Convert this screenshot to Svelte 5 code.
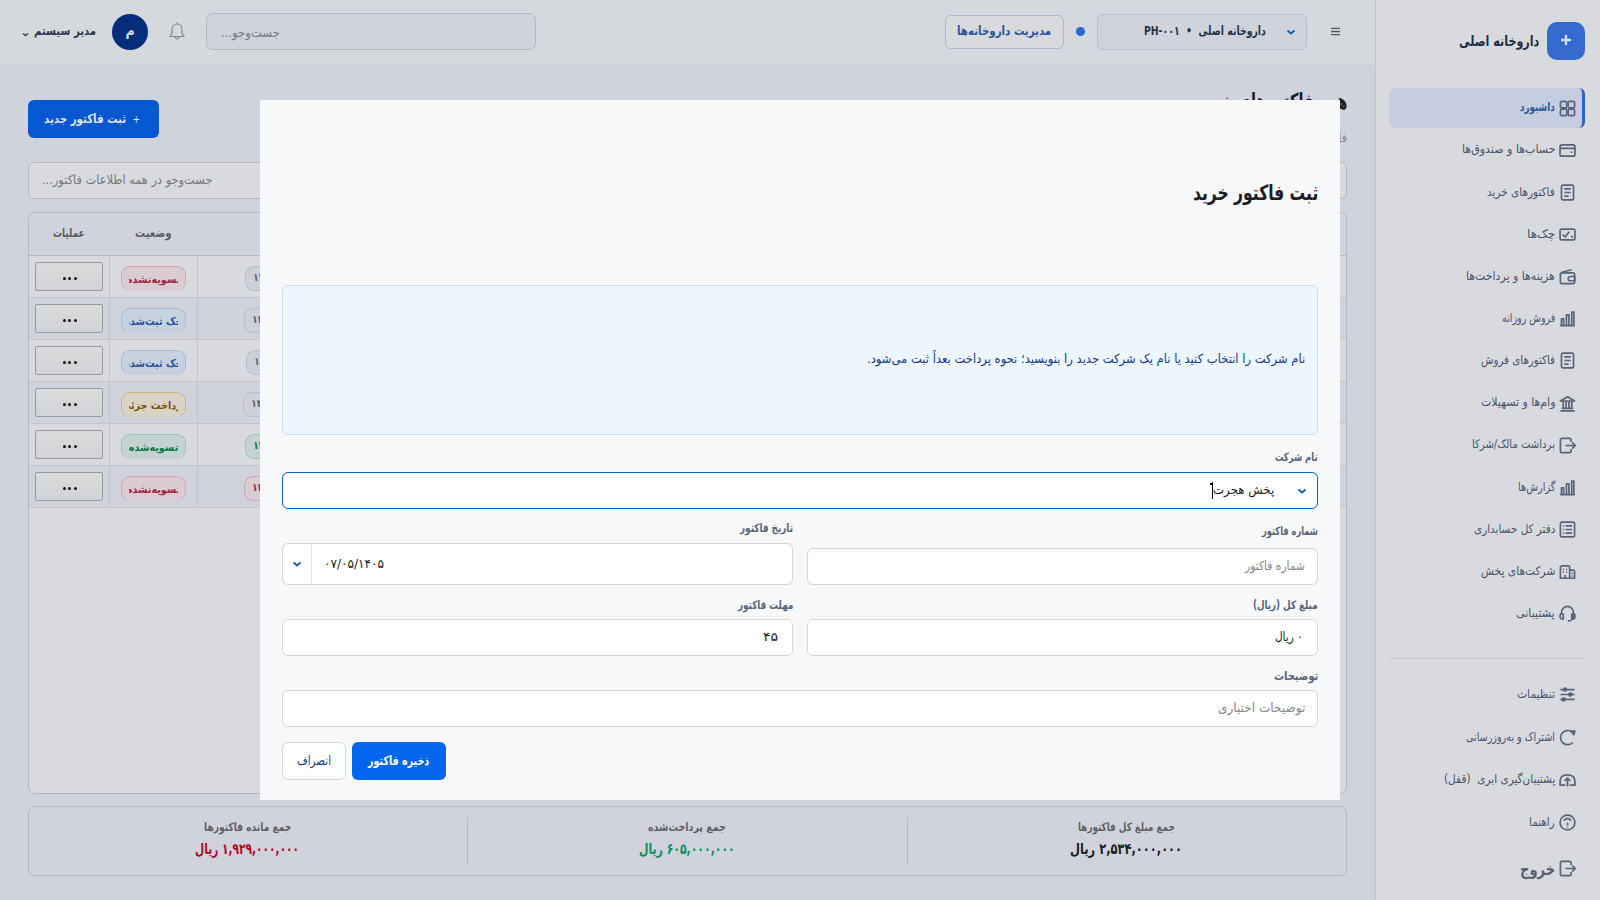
<script>
  const mainMenu = [
    { label: 'داشبورد', icon: 'grid', width: 35, active: true },
    { label: 'حساب‌ها و صندوق‌ها', icon: 'card', width: 93 },
    { label: 'فاکتورهای خرید', icon: 'invoice', width: 68 },
    { label: 'چک‌ها', icon: 'check', width: 28 },
    { label: 'هزینه‌ها و پرداخت‌ها', icon: 'wallet', width: 89 },
    { label: 'فروش روزانه', icon: 'chart', width: 53 },
    { label: 'فاکتورهای فروش', icon: 'invoice', width: 74 },
    { label: 'وام‌ها و تسهیلات', icon: 'bank', width: 74 },
    { label: 'برداشت مالک/شرکا', icon: 'exit', width: 83 },
    { label: 'گزارش‌ها', icon: 'chart', width: 37 },
    { label: 'دفتر کل حسابداری', icon: 'ledger', width: 81 },
    { label: 'شرکت‌های پخش', icon: 'building', width: 74 },
    { label: 'پشتیبانی', icon: 'headset', width: 39 }
  ];

  const footerMenu = [
    { label: 'تنظیمات', icon: 'sliders', width: 38 },
    { label: 'اشتراک و به‌روزرسانی', icon: 'refresh', width: 89 },
    { label: 'پشتیبان‌گیری ابری \u00a0(قفل)', icon: 'cloud', width: 111 },
    { label: 'راهنما', icon: 'help', width: 26 },
    { label: 'خروج', icon: 'exit', width: 35, logout: true }
  ];

  const invoices = [
    { status: 'تسویه‌نشده', tone: 'red', dateTone: 'gray', date: '۱۴۰۵/۰۶/۲۰', shift: 0 },
    { status: 'چک ثبت‌شده', tone: 'blue', dateTone: 'gray', date: '۱۴۰۵/۰۶/۱۵', shift: -1 },
    { status: 'چک ثبت‌شده', tone: 'blue', dateTone: 'gray', date: '۱۴۰۵/۰۶/۱۱', shift: 1 },
    { status: 'پرداخت جزئی', tone: 'amber', dateTone: 'gray', date: '۱۴۰۵/۰۵/۲۸', shift: -2 },
    { status: 'تسویه‌شده', tone: 'green', dateTone: 'green', date: '۱۴۰۵/۰۵/۱۰', shift: 0 },
    { status: 'تسویه‌نشده', tone: 'red', dateTone: 'red', date: '۱۴۰۵/۰۴/۲۵', shift: -1 }
  ];

  const totals = [
    { label: 'جمع مبلغ کل فاکتورها', value: '۲,۵۳۴,۰۰۰,۰۰۰ ریال', tone: 'dark', labelWidth: 97, width: 112 },
    { label: 'جمع پرداخت‌شده', value: '۶۰۵,۰۰۰,۰۰۰ ریال', tone: 'green', labelWidth: 78, width: 96 },
    { label: 'جمع مانده فاکتورها', value: '۱,۹۲۹,۰۰۰,۰۰۰ ریال', tone: 'red', labelWidth: 87, width: 104 }
  ];

  // Condenses a label horizontally so it takes exactly the given width
  function fit(node, width) {
    const natural = node.offsetWidth;
    const ratio = width / natural;
    const side = getComputedStyle(node).getPropertyValue('--side').trim() || 'right';
    node.style.transform = `scaleX(${ratio})`;
    node.style.transformOrigin = `${side} center`;
    const gap = `${width - natural}px`;
    if (side === 'right') node.style.marginLeft = gap;
    else node.style.marginRight = gap;
  }
</script>

{#snippet icon(name)}
  <svg class="icon" viewBox="0 0 24 24">
    {#if name === 'grid'}
      <rect x="2" y="2" width="9" height="9" rx="2" /><rect x="13" y="2" width="9" height="9" rx="2" />
      <rect x="2" y="13" width="9" height="9" rx="2" /><rect x="13" y="13" width="9" height="9" rx="2" />
    {:else if name === 'card'}
      <rect x="1.500" y="4" width="21" height="16" rx="2.5" /><path d="M1.500 9h21M16.500 14.500h2.500" />
    {:else if name === 'invoice'}
      <rect x="3.500" y="1.500" width="17" height="21" rx="2" /><path d="M7.500 7h9M7.500 12h9M7.500 17h6" />
    {:else if name === 'check'}
      <rect x="1.500" y="4.500" width="21" height="15" rx="2" /><path d="M5 12l3.500 3.500L14.500 8M17 15h3" />
    {:else if name === 'wallet'}
      <path d="M3 7h17a2 2 0 0 1 2 2v11a2 2 0 0 1-2 2H4a2 2 0 0 1-2-2V8l2-2 14-3.500M22.500 12H16a2.500 2.500 0 0 0 0 6h6.500z" />
    {:else if name === 'chart'}
      <path d="M1.500 22h21M3.500 21V12.500h3V21M10.500 21V7h3.500v14M18 21V3h3v18" />
    {:else if name === 'bank'}
      <path d="M2 8.500L12 2.500l10 6zM6 9v10M10 9v10M14 9v10M18 9v10M4 19h16M2 22.500h20" />
    {:else if name === 'exit'}
      <path d="M17 7V4a2 2 0 0 0-2-2H4a2 2 0 0 0-2 2v16a2 2 0 0 0 2 2h11a2 2 0 0 0 2-2v-3M9 12h14M18.500 7.500l4.500 4.500-4.500 4.500" />
    {:else if name === 'ledger'}
      <rect x="2" y="1.500" width="20" height="21" rx="2" /><path d="M6 7h1.500M9.500 7h9M6 12h1.500M9.500 12h9M6 17h1.500M9.500 17h9" />
    {:else if name === 'building'}
      <path d="M2 21.500V6a2 2 0 0 1 2-2h9a2 2 0 0 1 2 2v15.500zM15 10h5a2 2 0 0 1 2 2v9.500h-7M5.500 9H7M10 9h1.500M5.500 13H7M10 13h1.500M8.500 17v4M18.500 13.500v1.500M18.500 17.500v1.500" />
    {:else if name === 'headset'}
      <path d="M3.500 13v-2a8.500 9 0 0 1 17 0v4c0 5-4 7.500-8 7.500M2 13h4v7C3 20 1.500 18 1.500 16.500S1.500 14 2 13zM22 13h-4v7c3 0 4.500-2 4.500-3.500S22.500 14 22 13z" />
    {:else if name === 'sliders'}
      <path d="M2 5h20M2 12h20M2 19h20" /><circle class="solid" cx="8.500" cy="5" r="2" /><circle class="solid" cx="16" cy="12" r="2" /><circle class="solid" cx="6.500" cy="19" r="2" />
    {:else if name === 'refresh'}
      <path d="M19.500 19A10 10 0 1 1 18 4" /><path class="solid" d="M17 3h5.500l-1.500 5z" />
    {:else if name === 'cloud'}
      <path d="M9 20H1.500v-5C1.500 8.500 5 5.500 12 5.500S22.500 8.500 22.500 15v5H15M12 22V10M8 14l4-4 4 4" />
    {:else if name === 'help'}
      <circle cx="12" cy="12" r="10.500" /><path d="M7.500 9.500c1-4 8-4 9 0M12 12.500V16M12 18v1.500" />
    {/if}
  </svg>
{/snippet}

{#snippet chevron()}
  <svg class="chevron" viewBox="0 0 10 10"><path d="M1.500 3.500L5 6.500l3.500-3" /></svg>
{/snippet}

<div class="app" dir="rtl">
  <aside class="sidebar">
    <div class="brand">
      <span class="brand-mark"><svg viewBox="0 0 12 12"><path d="M6 1v10M1 6h10" /></svg></span>
      <strong class="brand-name" use:fit={80}>داروخانه اصلی</strong>
    </div>
    <nav class="main-menu">
      {#each mainMenu as item}
        <div class="menu-item" class:active={item.active}>
          {@render icon(item.icon)}
          <span class="menu-label" use:fit={item.width}>{item.label}</span>
        </div>
      {/each}
    </nav>
    <nav class="footer-menu">
      {#each footerMenu as item}
        <div class="menu-item" class:logout={item.logout}>
          {@render icon(item.icon)}
          <span class="menu-label" use:fit={item.width}>{item.label}</span>
        </div>
      {/each}
    </nav>
  </aside>

  <main class="main">
    <header class="topbar">
      <svg class="burger" viewBox="0 0 10 10"><path d="M0 1.500h10M0 5h10M0 8.500h10" /></svg>
      <div class="pharmacy-select">
        {@render chevron()}
        <span use:fit={122}>داروخانه اصلی &nbsp;•&nbsp; PH-۰۰۱</span>
      </div>
      <i class="dot"></i>
      <div class="manage-btn"><span use:fit={94}>مدیریت داروخانه‌ها</span></div>
      <div class="top-search"><span use:fit={59}>جست‌وجو...</span></div>
      <svg class="bell" viewBox="0 0 16 18">
        <path d="M1 14.500h14l-2-3V8c0-3.500-2-6-5-6S3 4.500 3 8v3.500zM8 2V.5M6 15c.5 2.500 3.500 2.500 4 0" />
      </svg>
      <div class="avatar">م</div>
      <div class="user"><span use:fit={62}>مدیر سیستم</span>{@render chevron()}</div>
    </header>

    <section class="content">
      <div class="page-head">
        <div>
          <h1><span use:fit={148}>همه فاکتورهای خرید</span></h1>
          <p>فاکتورهای خرید داروخانه</p>
        </div>
        <button class="new-btn"><span class="plus">+</span><span use:fit={82}>ثبت فاکتور جدید</span></button>
      </div>
      <div class="table-search"><span use:fit={170}>جست‌وجو در همه اطلاعات فاکتور...</span></div>
      <div class="table">
        <div class="row head">
          <span></span>
          <span class="head-cell"><span use:fit={36}>وضعیت</span></span>
          <span class="head-cell"><span use:fit={32}>عملیات</span></span>
        </div>
        {#each invoices as invoice}
          <div class="row">
            <div class="cell date-cell">
              <span class="pill date {invoice.dateTone}" style="margin-left: {47 + invoice.shift}px">{invoice.date}</span>
            </div>
            <div class="cell status-cell">
              <span class="pill status {invoice.tone}"><span class="clip"><b>{invoice.status}</b></span></span>
            </div>
            <div class="cell action-cell"><button class="more"><i></i><i></i><i></i></button></div>
          </div>
        {/each}
      </div>
      <div class="totals">
        {#each totals as total}
          <div class="total">
            <span class="total-label" use:fit={total.labelWidth}>{total.label}</span>
            <strong class={total.tone} use:fit={total.width}>{total.value}</strong>
          </div>
        {/each}
      </div>
    </section>
  </main>

  <div class="modal">
    <h2><span use:fit={125}>ثبت فاکتور خرید</span></h2>
    <div class="notice">
      <span use:fit={438}>نام شرکت را انتخاب کنید یا نام یک شرکت جدید را بنویسید؛ نحوه پرداخت بعداً ثبت می‌شود.</span>
    </div>
    <div class="field company">
      <label for="company"><span use:fit={43}>نام شرکت</span></label>
      <div class="input focused" id="company">{@render chevron()}<span use:fit={61}>پخش هجرت</span><i class="caret"></i></div>
    </div>
    <div class="field-row first">
      <div class="field">
        <label for="number"><span use:fit={56}>شماره فاکتور</span></label>
        <div class="input placeholder" id="number"><span use:fit={60}>شماره فاکتور</span></div>
      </div>
      <div class="field">
        <label for="date"><span use:fit={53}>تاریخ فاکتور</span></label>
        <div class="input date-input" id="date">
          <span class="date-value" dir="ltr"><span use:fit={60}>۰۷/۰۵/۱۴۰۵</span></span>
          <span class="date-toggle">{@render chevron()}</span>
        </div>
      </div>
    </div>
    <div class="field-row">
      <div class="field">
        <label for="amount"><span use:fit={65}>مبلغ کل (ریال)</span></label>
        <div class="input value" id="amount"><span use:fit={28}>۰ ریال</span></div>
      </div>
      <div class="field">
        <label for="due"><span use:fit={55}>مهلت فاکتور</span></label>
        <div class="input value" id="due"><span use:fit={15}>۴۵</span></div>
      </div>
    </div>
    <div class="field">
      <label for="notes"><span use:fit={44}>توضیحات</span></label>
      <div class="input placeholder" id="notes"><span use:fit={87}>توضیحات اختیاری</span></div>
    </div>
    <div class="actions">
      <button class="save"><span use:fit={61}>ذخیره فاکتور</span></button>
      <button class="cancel"><span use:fit={34}>انصراف</span></button>
    </div>
  </div>
</div>

<style>
  :global(body) {
    overflow: hidden;
  }

  .app,
  .app :global(*) {
    box-sizing: border-box;
  }

  .app {
    position: relative;
    display: flex;
    width: 1600px;
    height: 900px;
    background: #d0d3dc;
    color: #1b1d20;
    font-family: 'DejaVu Sans Condensed', 'DejaVu Sans', sans-serif;
    font-size: 12.5px;
    line-height: 1.3;
    white-space: nowrap;
  }

  span {
    flex-shrink: 0;
  }

  button {
    font: inherit;
    border: none;
    padding: 0;
  }

  /* Sidebar */
  .sidebar {
    width: 225px;
    padding: 22px 15px 0 13px;
    background: #d9dade;
    border-left: 1px solid #c2c6d1;
  }

  .brand {
    display: flex;
    align-items: center;
    gap: 8px;
    height: 38px;
    margin-bottom: 28px;
  }

  .brand-mark {
    display: grid;
    place-items: center;
    width: 38px;
    height: 38px;
    border-radius: 10px;
    background: #356ace;
  }

  .brand-mark svg {
    width: 12px;
    height: 12px;
    margin-bottom: 2px;
    stroke: #d9dade;
    stroke-width: 2.4;
  }

  .brand-name {
    padding-top: 1px;
    font-size: 15px;
    color: #222f45;
  }

  .main-menu {
    display: flex;
    flex-direction: column;
    gap: 2.16px;
    padding-bottom: 24px;
    border-bottom: 1px solid #c4c8d3;
  }

  .footer-menu {
    display: flex;
    flex-direction: column;
    gap: 2.5px;
    padding-top: 16px;
  }

  .menu-item {
    display: flex;
    align-items: center;
    gap: 4px;
    height: 40px;
    padding-right: 9px;
    border-radius: 6px;
    color: #47546b;
  }

  .menu-item.active {
    padding-right: 6px;
    border-right: 3px solid #2a66cd;
    background: #c5cee0;
  }

  .active .menu-label {
    font-weight: 700;
    color: #2b5596;
  }

  .menu-label {
    font-size: 12px;
  }

  .menu-item.logout {
    margin-top: 4px;
  }

  .logout .menu-label {
    font-size: 17px;
    font-weight: 700;
    color: #566075;
  }

  .icon {
    width: 17px;
    height: 17px;
    fill: none;
    stroke: #58647a;
    stroke-width: 2.4;
    stroke-linejoin: round;
  }

  .solid {
    fill: #58647a;
  }

  .chevron {
    width: 10px;
    height: 10px;
    fill: none;
    stroke: #0b57b8;
    stroke-width: 1.8;
  }

  /* Top bar */
  .main {
    display: flex;
    flex-direction: column;
    width: 1375px;
  }

  .topbar {
    display: flex;
    align-items: center;
    height: 66px;
    padding: 0 35px 2px 22px;
    background: #d5d8dc;
    border-bottom: 1px solid #c9cdd1;
  }

  .burger {
    width: 9px;
    height: 9px;
    stroke: #55585c;
    stroke-width: 1.4;
  }

  .pharmacy-select {
    display: flex;
    align-items: center;
    gap: 20px;
    width: 210px;
    height: 36px;
    margin-right: 24px;
    padding-right: 10px;
    border: 1px solid #b4bfcf;
    border-radius: 6px;
    background: #d0d3dc;
    color: #28344a;
    font-weight: 700;
  }

  .dot {
    width: 9px;
    height: 9px;
    margin-right: 12px;
    border-radius: 50%;
    background: #2c67cf;
  }

  .manage-btn {
    display: grid;
    place-items: center;
    width: 119px;
    height: 34px;
    margin-right: 12px;
    border: 1px solid #a8b9d3;
    border-radius: 6px;
    background: #d9dade;
    color: #2b5596;
    font-weight: 700;
  }

  .top-search {
    --side: left;
    display: flex;
    align-items: center;
    justify-content: flex-end;
    width: 330px;
    height: 37px;
    margin-right: auto;
    padding: 3px 0 0 14px;
    border: 1px solid #b5b8bd;
    border-radius: 7px;
    background: #d0d3dc;
    color: #777a80;
  }

  .bell {
    width: 16px;
    height: 18px;
    margin: 0 21px 2px 21px;
    fill: none;
    stroke: #85888d;
    stroke-width: 1.2;
  }

  .avatar {
    display: grid;
    place-items: center;
    width: 36px;
    height: 36px;
    border-radius: 50%;
    background: #042d7c;
    color: #d9dade;
    font-size: 14px;
    font-weight: 700;
  }

  .user {
    display: flex;
    align-items: center;
    gap: 5px;
    margin-right: 16px;
    color: #2c3850;
    font-weight: 700;
  }

  .user .chevron {
    width: 7px;
    height: 7px;
    margin-top: 5px;
    stroke: #2c3850;
  }

  /* Page */
  .content {
    display: flex;
    flex-direction: column;
    padding: 0 28px;
  }

  .page-head {
    display: flex;
    justify-content: space-between;
    height: 72px;
    margin-bottom: 24px;
    padding-top: 23px;
  }

  h1 {
    display: flex;
    margin: 0;
    font-size: 22px;
    line-height: 26px;
  }

  p {
    margin: 16px 0 0;
    font-size: 12px;
    color: #85888d;
  }

  .new-btn {
    display: flex;
    align-items: center;
    gap: 6px;
    width: 131px;
    height: 38px;
    margin-top: 11px;
    padding-right: 19px;
    border-radius: 6px;
    background: #0558cf;
    color: #dde3ec;
    font-weight: 700;
  }

  .plus {
    font-weight: 400;
    font-size: 10px;
  }

  .table-search {
    --side: left;
    display: flex;
    align-items: center;
    justify-content: flex-end;
    height: 37px;
    margin-bottom: 13px;
    padding-left: 13px;
    border: 1px solid #b5b8bc;
    border-radius: 6px;
    background: #d9dade;
    color: #75787c;
  }

  .table {
    height: 582px;
    margin-bottom: 12px;
    border: 1px solid #b5b8bc;
    border-radius: 7px;
    background: #d9dade;
    overflow: hidden;
  }

  .row {
    display: grid;
    grid-template-columns: 1fr 88px 80px;
    height: 42px;
    border-bottom: 1px solid #c3c5ca;
  }

  .row:nth-child(odd) {
    background: #d0d3dc;
  }

  .row.head {
    height: 43px;
    border-bottom-color: #b5b8bc;
    background: #d0d3dc;
    color: #595c61;
    font-size: 11.5px;
    font-weight: 700;
  }

  .head-cell {
    display: grid;
    place-items: center;
    padding-bottom: 1px;
  }

  .cell {
    display: flex;
    border-left: 1px solid #c3c5ca;
  }

  .action-cell {
    border-left: none;
    padding: 6px 6px 0;
  }

  .more {
    display: flex;
    align-items: center;
    justify-content: center;
    gap: 2.5px;
    width: 68px;
    height: 29px;
    padding: 4px 0 0 1px;
    border: 1px solid #989b9f;
    border-radius: 2px;
    background: linear-gradient(#dadbdd, #d1d3d6);
  }

  .more i {
    width: 3px;
    height: 3px;
    border-radius: 50%;
    background: #111;
  }

  .pill {
    height: 25px;
    margin-top: 10px;
    border: 1px solid;
    border-radius: 9px;
    font-size: 10.7px;
    font-weight: 700;
  }

  .date-cell {
    justify-content: flex-end;
  }

  .date {
    width: 78px;
    padding: 4px 7px;
    text-align: left;
    direction: ltr;
  }

  .status-cell {
    justify-content: center;
  }

  .status {
    width: 65px;
    padding: 0 7px;
    border-bottom: none;
  }

  .clip {
    display: flex;
    justify-content: center;
    width: 49px;
    height: 24px;
    line-height: 25px;
    overflow: hidden;
  }

  .gray { color: #5d6475; background: #cdd0d9; border-color: #b7bdc9; }
  .pill.red { color: #a22443; background: #dbcbd3; border-color: #d1a5b2; }
  .blue { color: #26549a; background: #c8d1e0; border-color: #a6b9d6; }
  .amber { color: #7c5510; background: #d9d3c6; border-color: #ccb57d; }
  .pill.green { color: #0d7550; background: #c4d3d2; border-color: #9cc6b9; }

  .totals {
    display: grid;
    grid-template-columns: 439px 440px 1fr;
    height: 70px;
    padding: 10px 0;
    border: 1px solid #b5b8bc;
    border-radius: 7px;
  }

  .total {
    display: flex;
    flex-direction: column;
    align-items: center;
    gap: 5px;
    padding-right: 1px;
    border-left: 1px solid #b5b8bc;
  }

  .total:last-child {
    border-left: none;
  }

  .total-label {
    padding-top: 3px;
    color: #5f6267;
    font-size: 11.5px;
    font-weight: 700;
  }

  .total strong {
    font-size: 15px;
  }

  strong.green { color: #07915f; }
  strong.red { color: #b00724; }

  /* Invoice dialog */
  .modal {
    position: absolute;
    top: 100px;
    left: 260px;
    width: 1080px;
    height: 700px;
    padding: 80px 22px 0;
    background: #f7f8fa;
  }

  h2 {
    display: flex;
    height: 105px;
    margin: 0;
    font-size: 21px;
    line-height: 27px;
  }

  .notice {
    display: flex;
    align-items: center;
    height: 150px;
    margin-bottom: 14px;
    padding: 0 12px 1px;
    border: 1px solid #c8dcf5;
    border-radius: 6px;
    background: #edf5ff;
    color: #173b84;
  }

  .field {
    flex: 1;
  }

  label {
    display: flex;
    height: 21px;
    color: #596579;
    font-size: 11.5px;
    font-weight: 700;
  }

  .company label {
    height: 23px;
    padding-top: 1px;
  }

  .input {
    display: flex;
    align-items: center;
    height: 37px;
    padding-right: 12px;
    border: 1px solid #d5d6d8;
    border-radius: 6px;
    background: #fff;
  }

  .input.value {
    padding-right: 14px;
  }

  .placeholder {
    color: #85878a;
  }

  .focused {
    border-color: #075fd2;
    padding-right: 10px;
  }

  .focused .chevron {
    margin-left: 23px;
  }

  .caret {
    width: 3px;
    height: 17px;
    margin-left: -2px;
    border-right: 1px solid #000;
    background: linear-gradient(#000, #000) no-repeat 0 1px / 2px 2px;
  }

  .field-row {
    display: flex;
    gap: 14px;
    height: 71px;
  }

  .field-row.first {
    height: 89px;
    padding-top: 12px;
  }

  .field-row.first .field:first-child {
    padding-top: 3px;
  }

  .field-row.first label {
    height: 24px;
  }

  .field-row.first .field:last-child label {
    height: 22px;
  }

  .date-input {
    --side: left;
    height: 42px;
    padding: 0;
    justify-content: flex-end;
  }

  .date-value {
    display: flex;
    padding-left: 12px;
  }

  .date-toggle {
    display: grid;
    place-items: center;
    width: 29px;
    height: 40px;
    border-right: 1px solid #e0e1e4;
  }

  .actions {
    display: flex;
    justify-content: flex-end;
    gap: 6px;
    margin-top: 15px;
  }

  .actions button {
    display: grid;
    place-items: center;
    height: 38px;
    border-radius: 6px;
  }

  .actions .save {
    width: 94px;
    background: #0465ee;
    color: #fff;
    font-weight: 700;
  }

  .actions .cancel {
    width: 64px;
    border: 1px solid #d5d6d8;
    background: #fff;
    color: #173b84;
  }
</style>
